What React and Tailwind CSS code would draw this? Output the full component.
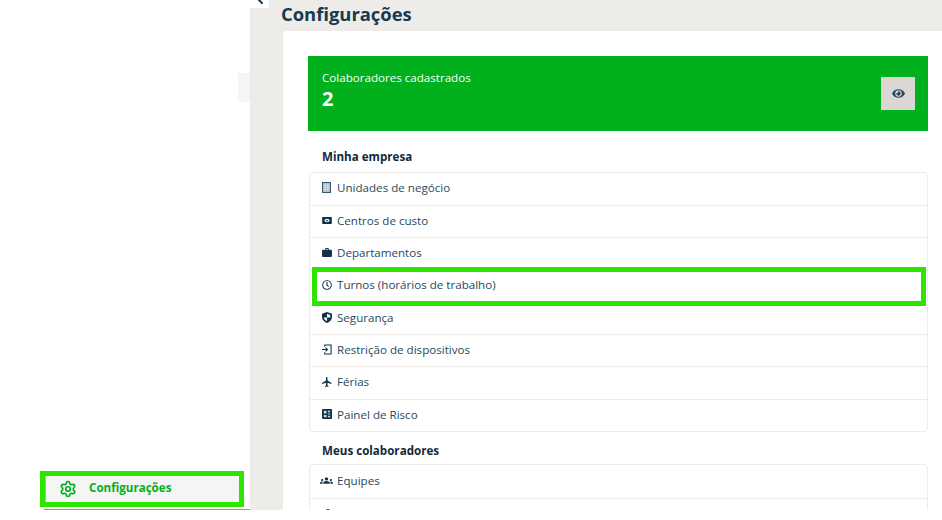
import { FaRegClock, FaEye, FaChevronLeft } from 'react-icons/fa'
import { MdFlight, MdGroups, MdPerson } from 'react-icons/md'
import { Settings } from 'lucide-react'

const BuildingIcon = () => (
  <svg width="9" height="11" viewBox="0 0 10 12">
    <rect x="0.5" y="0.5" width="9" height="11" fill="#9fb2bd" stroke="#274a5e" />
    <path d="M3.5 1v10M6.5 1v10M1 3.5h8M1 6h8M1 8.5h8" stroke="#e8edf0" strokeWidth="0.8" />
  </svg>
)

const BillIcon = () => (
  <svg width="10" height="7" viewBox="0 0 11 8">
    <rect width="11" height="8" rx="0.5" fill="#123247" />
    <ellipse cx="5.5" cy="4" rx="2.8" ry="2" fill="#fff" />
    <circle cx="5.5" cy="4" r="1" fill="#123247" />
  </svg>
)

const BriefcaseIcon = () => (
  <svg width="10" height="9" viewBox="0 0 11 10">
    <path d="M3.5 2V1a1 1 0 0 1 1-1h2a1 1 0 0 1 1 1v1H10a1 1 0 0 1 1 1v6a1 1 0 0 1-1 1H1a1 1 0 0 1-1-1V3a1 1 0 0 1 1-1zM4.500 1v1h2V1z" fill="#123247" fillRule="evenodd" />
  </svg>
)

const ClockIcon = () => <FaRegClock size={10} />

const ShieldIcon = () => (
  <svg width="10" height="11" viewBox="0 0 11 12">
    <path d="M5.500 0 11 2v3.500c0 3-2.200 5.400-5.500 6.500C2.200 10.900 0 8.500 0 5.500V2z" fill="#123247" />
    <path d="M5.500 2 9 3.200V6H5.500zM5.500 6v4C3.700 9.200 2.300 7.800 2 6z" fill="#fff" />
  </svg>
)

const DeviceIcon = () => (
  <svg width="10" height="11" viewBox="0 0 11 12" fill="none" stroke="#123247">
    <path d="M3 3V1h7v10H3V9" strokeWidth="1.200" />
    <path d="M0 6h5.500M4 4l2 2-2 2" strokeWidth="1.200" />
  </svg>
)

const PlaneIcon = () => <MdFlight size={12} className="-ml-px" />

const PanelIcon = () => (
  <svg width="10" height="10" viewBox="0 0 11 11">
    <rect width="11" height="11" rx="1" fill="#123247" />
    <path d="M2 2h3v3H2zM6.500 2H9v1.500H6.500zM6.500 5H9v1H6.500zM2 6.500h3V9H2zM6.500 7.500H9V9H6.500z" fill="#cfd8dd" />
  </svg>
)

const company = [
  { label: 'Unidades de negócio', icon: BuildingIcon },
  { label: 'Centros de custo', icon: BillIcon },
  { label: 'Departamentos', icon: BriefcaseIcon },
  { label: 'Turnos (horários de trabalho)', icon: ClockIcon },
  { label: 'Segurança', icon: ShieldIcon },
  { label: 'Restrição de dispositivos', icon: DeviceIcon },
  { label: 'Férias', icon: PlaneIcon },
  { label: 'Painel de Risco', icon: PanelIcon },
]

const people = [
  { label: 'Equipes', icon: () => <MdGroups size={13} className="-ml-0.5" /> },
  { label: 'Cargos', icon: () => <MdPerson size={12} /> },
]

function MenuList({ items }) {
  return (
    <div className="rounded border border-[#eeece9] bg-white">
      {items.map(({ label, icon: Icon }, i) => (
        <div key={label} className={`flex h-[32.3px] items-center pb-0.5 pl-3 text-[11.6px] text-[#274a5e] ${i > 0 ? 'border-t border-[#eeece9]' : ''}`}>
          <span className="flex w-[15px] shrink-0 justify-start text-[#123247]">
            <Icon />
          </span>
          {label}
        </div>
      ))}
    </div>
  )
}

export default function App() {
  return (
    <div className="relative h-[510px] w-[942px] overflow-hidden bg-white font-['Open_Sans',sans-serif]">
      <div className="flex h-full">
        {/* sidebar */}
        <aside className="flex w-[250px] shrink-0 flex-col bg-white">
          <div className="mt-[73px] ml-auto h-[29px] w-3 bg-[#f5f5f5]" />
          <div className="mt-auto ml-11 border-b border-[#8f9aa3] pb-[5px]">
            <div className="flex h-[30px] w-[196px] items-center border-l-2 border-[#f5b800] bg-[#f5f5f5] pl-[14px] text-[11.6px] font-bold text-[#00b01c]">
              <Settings size={18} strokeWidth={2.25} className="mr-[12px] -ml-px" />
              <span className="-translate-y-px">Configurações</span>
            </div>
          </div>
        </aside>

        {/* main */}
        <main className="min-w-0 flex-1 bg-[#eeece9]">
          <h1 className="ml-[31px] h-[31px] text-[18.4px] leading-[27px] font-bold text-[#173a4f]">Configurações</h1>
          <div className="ml-[33px] h-[600px] rounded-tl-sm bg-white pt-[25px] pr-[14px] pl-[26px]">
            <div className="-ml-px flex h-[75px] items-center justify-between bg-[#00b01c] pr-[13px] pl-[14px] text-white">
              <div className="pb-[8px]">
                <div className="text-[11.6px] leading-[18px]">Colaboradores cadastrados</div>
                <div className="text-xl leading-[23px] font-bold">2</div>
              </div>
              <button className="flex h-[33px] w-[34px] items-center justify-center bg-[#dbd8d4] text-[#274a5e]">
                <FaEye size={13} />
              </button>
            </div>
            <h2 className="mt-[17px] mb-[6.5px] pl-[13px] text-[11.6px] leading-[17px] font-bold text-[#14293a]">Minha empresa</h2>
            <MenuList items={company} />
            <h2 className="mt-[10.5px] mb-[5px] pl-[13px] text-[11.6px] leading-[17px] font-bold text-[#14293a]">Meus colaboradores</h2>
            <MenuList items={people} />
          </div>
        </main>
      </div>

      {/* collapse tab, chevron clipped by the top of the window */}
      <div className="absolute top-0 left-[250px] flex h-2 w-[19px] items-start justify-center overflow-hidden bg-white text-[#14293a]">
        <FaChevronLeft size={12} className="-translate-y-[7px]" />
      </div>

      {/* highlight boxes */}
      <div className="absolute top-[471px] left-10 h-9 w-[204px] border-[5px] border-[#2de500]" />
      <div className="absolute top-[267px] left-[312px] h-[39px] w-[614px] border-[5px] border-[#2de500]" />
    </div>
  )
}
